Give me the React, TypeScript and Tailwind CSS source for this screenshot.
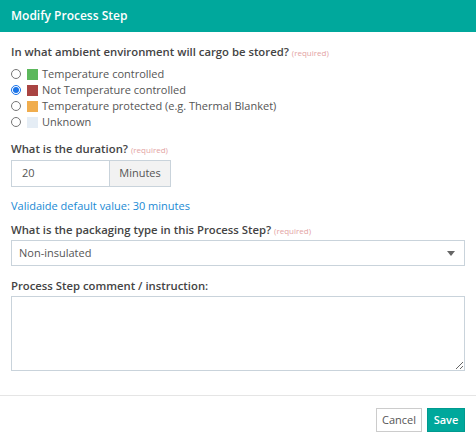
import React from "react";

const options = [
  { label: "Temperature controlled", color: "bg-[#5cb85c]" },
  { label: "Not Temperature controlled", color: "bg-[#a94442]", checked: true },
  { label: "Temperature protected (e.g. Thermal Blanket)", color: "bg-[#f0ad4e]" },
  { label: "Unknown", color: "bg-[#e5edf5]" },
];

function Required() {
  return <span className="ml-[3px] text-[8px] font-normal text-[#e3a3a3]">(required)</span>;
}

export default function App() {
  return (
    <div
      className="w-[476px] h-[441px] bg-white text-[#555] text-[11px] flex flex-col"
      style={{ fontFamily: '"Open Sans", sans-serif' }}
    >
      <div className="h-[32px] bg-[#00a89c] flex items-center px-[11px]">
        <h1 className="text-white text-[12px] font-semibold">Modify Process Step</h1>
      </div>

      <div className="px-[11px] pt-[13px]">
        <div className="text-[#444] text-[11.3px] font-semibold leading-[14px]">
          In what ambient environment will cargo be stored?
          <Required />
        </div>
        <div className="mt-[6px] flex flex-col">
          {options.map((o) => (
            <label key={o.label} className="h-[16px] flex items-center">
              <input
                type="radio"
                name="env"
                defaultChecked={o.checked}
                className="w-[10px] h-[10px] m-0 accent-[#1a73e8]"
              />
              <span className={`ml-[6px] w-[11px] h-[11px] ${o.color}`} />
              <span className="ml-[4px] text-[#555]">{o.label}</span>
            </label>
          ))}
        </div>

        <div className="mt-[12px] text-[#444] text-[11.3px] font-semibold leading-[14px]">
          What is the duration?
          <Required />
        </div>
        <div className="mt-[3px] flex w-[160px] h-[27px] border border-[#c9d3db]">
          <input
            defaultValue="20"
            className="w-[97px] px-[10px] outline-none text-[#555] text-[11px]"
          />
          <span className="flex-1 flex items-center justify-center bg-[#f2f2f2] border-l border-[#c9d3db] text-[#555]">
            Minutes
          </span>
        </div>

        <div className="mt-[12px] text-[#1a8ad4] leading-[14px]">Validaide default value: 30 minutes</div>

        <div className="mt-[10px] text-[#444] text-[11.3px] font-semibold leading-[14px]">
          What is the packaging type in this Process Step?
          <Required />
        </div>
        <div className="mt-[2px] h-[26px] border border-[#c9d3db] flex items-center justify-between pl-[7px] pr-[9px]">
          <span className="text-[#555]">Non-insulated</span>
          <svg width="8" height="5" viewBox="0 0 8 5">
            <path d="M0 0h8L4 5z" fill="#666" />
          </svg>
        </div>

        <div className="mt-[13px] text-[#444] text-[11.3px] font-semibold leading-[14px]">
          Process Step comment / instruction:
        </div>
        <textarea className="mt-[3px] block w-full h-[75px] border border-[#c9d3db] outline-none" />
      </div>

      <div className="mt-[24px] border-t border-[#e5e5e5] flex justify-end gap-[5px] px-[11px] pt-[12px]">
        <button className="w-[46px] h-[24px] border border-[#ccc] bg-white text-[#555] text-[11px]">Cancel</button>
        <button className="w-[38px] h-[24px] bg-[#00a89c] border border-[#009a8f] text-white text-[11px] font-semibold">
          Save
        </button>
      </div>
    </div>
  );
}
